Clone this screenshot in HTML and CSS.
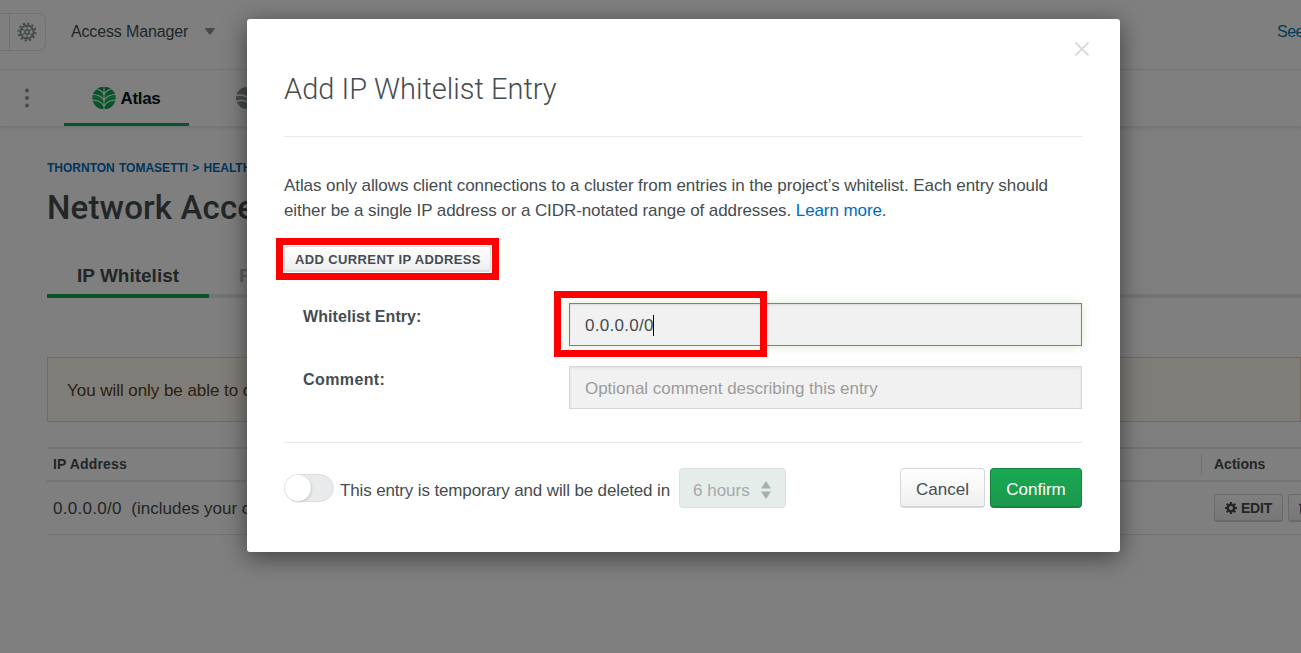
FILE: index.html
```html
<!DOCTYPE html>
<html lang="en">
<head>
<meta charset="utf-8">
<title>Network Access</title>
<link rel="stylesheet" href="styles.css">
</head>
<body>
<div class="page">
  <header class="topbar">
    <div class="settings-group">
      <div class="settings-cell"></div>
      <div class="settings-cell gear-cell">
        <svg width="20" height="20" viewBox="0 0 20 20" fill="none" stroke="#89979b"><circle cx="10" cy="10" r="6.6" stroke-width="2"/><circle cx="10" cy="10" r="8.5" stroke-width="2" stroke-dasharray="2.2 2.25"/><circle cx="10" cy="10" r="2" stroke-width="1.4"/><path d="M10 3v5M10 12v5M4 6.5l4.3 2.5M11.7 11l4.3 2.5M4 13.5L8.300 11M11.700 9L16 6.500" stroke-width="1.2"/></svg>
      </div>
    </div>
    <span class="topbar-link">Access Manager</span>
    <svg class="caret" width="10" height="7" viewBox="0 0 10 7"><path d="M1 0h8q1.500 0 .6 1.200L5.800 6.200q-.8.800-1.600 0L.4 1.200Q-.5 0 1 0z" fill="#89979b"/></svg>
    <span class="see-link">See</span>
  </header>
  <nav class="nav">
    <svg class="dots" width="6" height="20" viewBox="0 0 6 20" fill="#89979b"><circle cx="3" cy="2.500" r="2"/><circle cx="3" cy="10" r="2"/><circle cx="3" cy="17.500" r="2"/></svg>
    <div class="nav-tab nav-tab-active">
      <svg width="24" height="24" viewBox="0 0 24 24"><defs><linearGradient id="leaf" x1="0" y1="0" x2="0" y2="1"><stop offset="0" stop-color="#0a8a4c"/><stop offset=".5" stop-color="#13bd60"/><stop offset="1" stop-color="#0a9650"/></linearGradient></defs><ellipse cx="12" cy="12" rx="11.700" ry="11.200" fill="url(#leaf)"/><path d="M12 0v24M12 8.500Q9.500 4 3.500 2.500M12 8.500Q14.500 4 20.500 2.500M12 14.500Q9 8.500 0 8.500M12 14.500Q15 8.500 24 8.500M12 20.500Q9 14 0 14M12 20.500Q15 14 24 14" fill="none" stroke="#fff" stroke-width="1.100"/></svg>
      <span>Atlas</span>
    </div>
    <svg class="second-logo" width="24" height="24" viewBox="0 0 24 24"><circle cx="12" cy="12" r="11" fill="#89979b"/><path d="M0 9.500Q7 8 12 11t12 0M0 16Q7 12.500 12 16t12 0" fill="none" stroke="#fff" stroke-width="1.500"/></svg>
  </nav>
  <main class="content">
    <div class="crumbs">THORNTON TOMASETTI &gt; HEALTH</div>
    <h1 class="title">Network Access</h1>
    <div class="tabs"><div class="tab tab-active"><span>IP Whitelist</span></div><div class="tab">Peering</div></div>
    <div class="notice">You will only be able to connect to your cluster</div>
    <div class="table">
      <div class="row row-head"><span class="th-ip">IP Address</span><span class="th-actions">Actions</span></div>
      <div class="row row-body"><span class="td-ip"><span class="address">0.0.0.0/0</span> &nbsp;(includes your current IP)</span>
        <div class="actions">
          <span class="small-btn"><svg width="12" height="12" viewBox="0 0 12 12"><circle cx="6" cy="6" r="3.300" fill="none" stroke="#464c4f" stroke-width="2.600"/><path d="M6 0v2M6 10v2M0 6h2M10 6h2M1.800 1.800l1.400 1.400M8.800 8.800l1.400 1.400M1.800 10.200l1.400-1.400M8.800 3.200l1.400-1.400" stroke="#464c4f" stroke-width="2.200"/></svg><span>EDIT</span></span>
          <span class="small-btn delete-btn"><svg width="12" height="12" viewBox="0 0 12 12"><path d="M0 2.500h12M2 3v8h8V3" fill="none" stroke="#60435a" stroke-width="1.500"/></svg></span>
        </div>
      </div>
    </div>
  </main>
</div>
<div class="backdrop">
  <section class="modal">
    <svg class="close" width="16" height="16" viewBox="0 0 16 16"><path d="M1.500 1.500l13 13M14.500 1.500l-13 13" stroke="#dcdcdd" stroke-width="2"/></svg>
    <h2 class="modal-title"><span>Add IP Whitelist Entry</span></h2>
    <p class="intro"><span class="line-one">Atlas only allows client connections to a cluster from entries in the project’s whitelist. Each entry should</span><br><span class="line-two">either be a single IP address or a CIDR-notated range of addresses. <a>Learn more</a>.</span></p>
    <div class="current-ip"><button class="current-btn"><span>ADD CURRENT IP ADDRESS</span></button><div class="highlight highlight-button"></div></div>
    <div class="field"><label>Whitelist Entry:</label><div class="input input-focus"><span class="address">0.0.0.0/0</span><i class="cursor"></i><div class="highlight highlight-input"></div></div></div>
    <div class="field"><label class="comment-label">Comment:</label><div class="input"><span class="placeholder">Optional comment describing this entry</span></div></div>
    <footer class="footer">
      <div class="toggle"><div class="knob"></div></div>
      <span class="temp">This entry is temporary and will be deleted in</span>
      <div class="select"><span>6 hours</span><svg width="10" height="18" viewBox="0 0 10 18" fill="#a5b0ae"><path d="M5 0l5 7.500H0zM0 10.500h10L5 18z"/></svg></div>
      <button class="btn cancel"><span>Cancel</span></button>
      <button class="btn confirm"><span>Confirm</span></button>
    </footer>
  </section>
</div>
</body>
</html>
```
FILE: styles.css
```css
* { box-sizing: border-box; }
body { margin: 0; width: 1301px; height: 653px; overflow: hidden; background: #fff; color: #464c4f; font: 17px/25px "Liberation Sans", Arial, sans-serif; white-space: nowrap; }
.page { width: 1301px; height: 653px; overflow: hidden; background: #fefefe; }
.topbar { height: 70px; display: flex; align-items: center; border-bottom: 1px solid #e7eaea; background: #fff; padding-bottom: 6px; }
.settings-group { display: flex; width: 46px; height: 38px; border: 1px solid #e2e4e6; border-left: 0; border-radius: 0 7px 7px 0; }
.settings-cell { width: 9px; }
.gear-cell { flex: 1; border-left: 1px solid #e2e4e6; display: flex; align-items: center; justify-content: center; padding-right: 2px; }
.topbar-link { margin-left: 25px; font-size: 16px; letter-spacing: -.15px; color: #3d4f58; width: 134px; }
.see-link { margin-left: auto; width: 24px; font-size: 16px; letter-spacing: -.5px; color: #007cad; }
.nav { height: 56px; background: #fff; display: flex; align-items: center; box-shadow: 0 2px 4px #dde4ee; }
.dots { margin-left: 24px; }
.nav-tab { width: 125px; height: 56px; margin-left: 34px; display: flex; align-items: center; justify-content: center; gap: 4px; font-weight: bold; font-size: 17px; letter-spacing: -.3px; color: #061621; border-bottom: 3px solid #13aa52; padding-top: 3px; border-radius: 2px 2px 0 0; }
.second-logo { margin-left: 46px; }
.content { padding: 30px 0 0 47px; }
.crumbs { height: 24px; line-height: 24px; font-size: 12px; font-weight: bold; color: #006cbc; word-spacing: .9px; }
.title { margin: 5px 0 0; font: 500 33px/46px Roboto, sans-serif; letter-spacing: .15px; }
.tabs { display: flex; height: 47px; margin-top: 20px; border-bottom: 4px solid #e7eaea; font-size: 19px; font-weight: bold; }
.tab { height: 47px; padding: 12px 30px 0; color: #b8babb; }
.tab-active { width: 162px; color: #464c4f; border-bottom: 4px solid #13aa52; }
.notice { margin-top: 59px; height: 65px; line-height: 65px; padding-left: 19px; border: 1px solid #ecd9a9; background: #fefaee; color: #59431f; letter-spacing: -.05px; }
.table { margin-top: 25px; border-top: 2px solid #e7e7e7; }
.row { display: flex; justify-content: space-between; padding-left: 6px; }
.row-head { height: 33px; border-bottom: 2px solid #e7e7e7; align-items: center; font-size: 14px; font-weight: bold; letter-spacing: .15px; }
.th-actions { width: 100px; height: 21px; line-height: 21px; border-left: 1px solid #dedede; padding-left: 12px; letter-spacing: 0; }
.row-body { height: 53px; align-items: center; border-bottom: 1px solid #e7e7e7; }
.address { letter-spacing: .3px; }
.actions { width: 87px; display: flex; gap: 5px; }
.small-btn { flex: none; width: 69px; height: 28px; padding-top: 1px; border: 1px solid #d5d5d5; border-bottom-width: 2px; border-radius: 3px; display: flex; align-items: center; justify-content: center; gap: 4px; font-size: 14px; font-weight: bold; letter-spacing: -.2px; background: linear-gradient(#fff, #f0f0f0); }
.delete-btn { width: 90px; justify-content: flex-start; padding-left: 10px; }
.backdrop { position: absolute; inset: 0; background: rgba(0,0,0,.5); padding: 19px 0 0 247px; overflow: hidden; }
.modal { position: relative; width: 873px; height: 533px; padding: 45px 38px 0 37px; background: #fff; border-radius: 3px; box-shadow: 0 5px 25px rgba(0,0,0,.5); }
.close { position: absolute; right: 30.500px; top: 22px; }
.modal-title { margin: 0; height: 73px; font: 300 29px/50px Roboto, sans-serif; border-bottom: 1px solid #e9e9e9; }
.intro { margin: 36px 0 0; height: 50px; letter-spacing: -.08px; }
.line-two { letter-spacing: -.085px; }
.intro a { color: #006cbc; }
.current-ip { position: relative; margin-top: 23px; height: 26px; display: flex; }
.current-btn { width: 207px; height: 26px; padding: 1px 0 0; border: 1px solid #d9dddd; border-bottom-width: 2px; border-radius: 3px; background: linear-gradient(#fff, #eee); color: #464c4f; font: bold 13px/20px "Liberation Sans", sans-serif; letter-spacing: .37px; }
.current-btn span { position: relative; left: .5px; top: .5px; }
.highlight { position: absolute; border: 7px solid #f00; }
.highlight-button { left: -8px; top: -8px; width: 223px; height: 42px; }
.field { display: flex; height: 43px; margin-top: 20px; padding-left: 19px; }
.current-ip + .field { margin-top: 31px; }
label { width: 266px; height: 27px; font-weight: bold; font-size: 16px; line-height: 27px; letter-spacing: .07px; }
.comment-label { letter-spacing: .4px; }
.input { position: relative; width: 513px; height: 43px; border: 1px solid #d5d6d6; background: #f1f1f1; box-shadow: inset 0 1px 3px rgba(0,0,0,.08); padding: 2px 15px 0; display: flex; align-items: center; }
.input-focus { border-color: #25b561; box-shadow: inset 0 1px 2px rgba(0,0,0,.1), 0 0 10px #dcebcd; }
.cursor { width: 1px; height: 21px; margin-left: -1px; background: #000; }
.highlight-input { left: -16px; top: -13px; width: 213px; height: 66px; }
.placeholder { color: #9c9c9c; letter-spacing: -.03px; }
.footer { margin-top: 33px; border-top: 1px solid #e9e9e9; padding-top: 25px; display: flex; align-items: flex-start; }
.toggle { width: 50px; height: 28px; margin-top: 6px; border: 1px solid #dde0e0; border-radius: 14px; background: #e8eaeb; }
.knob { width: 26px; height: 26px; border-radius: 50%; background: #fff; box-shadow: 1px 1px 2px #c8cccd; }
.temp { margin: 10px 0 0 6px; width: 339px; letter-spacing: -.14px; }
.select { width: 107px; height: 40px; border: 1px solid #dae2df; border-radius: 4px; background: #e5edeb; color: #a5a9a8; display: flex; align-items: center; justify-content: space-between; padding: 4px 14px 0 13px; }
.btn { height: 40px; padding: 0; border: 1px solid #d5d7d7; border-bottom-width: 2px; border-radius: 4px; font: 17px/25px "Liberation Sans", sans-serif; color: #464c4f; background: linear-gradient(#fff, #efefef); }
.btn span { position: relative; top: 2px; }
.cancel { margin-left: auto; width: 85px; }
.confirm { margin-left: 5px; width: 92px; color: #fff; border-color: #13853f; background: linear-gradient(#19a953, #1b984c); }
```
